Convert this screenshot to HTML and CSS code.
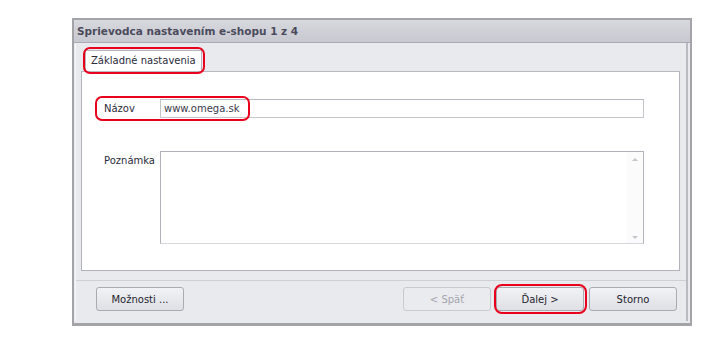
FILE: index.html
```html
<!DOCTYPE html>
<html lang="sk">
<head>
    <meta charset="UTF-8">
    <meta name="viewport" content="width=device-width, initial-scale=1.0">
    <title>Sprievodca nastavením e-shopu</title>
    <link rel="stylesheet" href="styles.css">
</head>
<body>
    <div class="window">
        <div class="titlebar">Sprievodca nastavením e-shopu 1 z 4</div>
        <div class="frame">
            <div class="tabs">
                <div class="tab active">Základné nastavenia<span class="mark mark-tab"></span></div>
            </div>
            <div class="tabpage">
                <div class="form">
                    <label class="label">Názov</label>
                    <div class="input">www.omega.sk</div>
                    <label class="label">Poznámka</label>
                    <div class="memo">
                        <div class="scroll">
                            <span class="arrow up"></span>
                            <span class="arrow down"></span>
                        </div>
                    </div>
                    <span class="mark mark-name"></span>
                </div>
            </div>
            <div class="footer">
                <button class="btn">Možnosti ...</button>
                <div class="spacer"></div>
                <button class="btn" disabled>&lt; Späť</button>
                <button class="btn next">Ďalej &gt;<span class="mark mark-next"></span></button>
                <button class="btn">Storno</button>
            </div>
        </div>
    </div>
</body>
</html>
```

FILE: styles.css
```css
body {
    margin: 0;
    background: #ffffff;
    font-family: "DejaVu Sans", Tahoma, sans-serif;
    font-size: 10px;
    color: #2b2b3a;
}
.window {
    margin: 18px 0 0 72px;
    width: 616px;
    height: 303px;
    border: 2px solid #a4a4a8;
    border-bottom-width: 3px;
    background: #e9eaee;
    display: flex;
    flex-direction: column;
}
.titlebar {
    height: 22px;
    line-height: 22px;
    padding-left: 3px;
    background: linear-gradient(to bottom, #d8d9de, #c7c8d0);
    border-bottom: 1px solid #a9aab4;
    font-weight: bold;
    font-size: 10.5px;
    color: #4b4b5c;
}
.frame {
    flex: 1;
    margin: 0 2px 2px 1px;
    border-left: 1px solid #f7f7f9;
    border-right: 2px solid #b9bac2;
    display: flex;
    flex-direction: column;
}
.tabs {
    height: 28px;
    display: flex;
    align-items: flex-end;
    padding-left: 9px;
}
.tab {
    position: relative;
    height: 20px;
    line-height: 20px;
    padding: 0 5px;
    background: #ffffff;
    border: 1px solid #b4b5bd;
    border-bottom: none;
    color: #2b2b3a;
}
.tabpage {
    height: 198px;
    margin: 0 6px 0 5px;
    background: #ffffff;
    border: 1px solid #b1b2ba;
    border-top-color: #b8b9c1;
}
.form {
    position: relative;
    display: grid;
    grid-template-columns: 56px 1fr;
    row-gap: 33px;
    padding: 27px 35px 0 22px;
}
.label {
    padding-top: 4px;
    color: #2b2b3a;
}
.input {
    height: 17px;
    line-height: 17px;
    padding-left: 3px;
    border: 1px solid #c5c6cc;
    border-top-color: #b7b8c0;
    color: #3a3a4a;
}
.memo {
    height: 91px;
    border: 1px solid #b0b1ba;
    border-bottom-color: #d6d7dc;
    display: flex;
    justify-content: flex-end;
}
.scroll {
    width: 16px;
    background: #fbfbfc;
    display: flex;
    flex-direction: column;
    justify-content: space-between;
    align-items: center;
    padding: 6px 0 4px;
}
.arrow {
    width: 0;
    height: 0;
    border-left: 3px solid transparent;
    border-right: 3px solid transparent;
}
.arrow.up {
    border-bottom: 3px solid #c5c6cc;
}
.arrow.down {
    border-top: 3px solid #c5c6cc;
}
.footer {
    flex: 1;
    margin-top: 9px;
    border-top: 1px solid #cfd0d6;
    display: flex;
    align-items: flex-start;
    gap: 5px;
    padding: 6px 9px 0 20px;
}
.spacer {
    flex: 1;
}
.btn {
    position: relative;
    width: 88px;
    height: 24px;
    font-family: "DejaVu Sans", Tahoma, sans-serif;
    font-size: 10px;
    color: #1f1f2e;
    background: linear-gradient(to bottom, #f1f2f5, #dfe0e5);
    border: 1px solid #a9aab2;
    border-radius: 3px;
    padding: 0;
}
.btn[disabled] {
    color: #a4a5ad;
    border-color: #c9cacf;
    background: #eaebee;
}
.mark {
    position: absolute;
    border: 2px solid #e8001c;
    border-radius: 7px;
    pointer-events: none;
}
.mark-tab {
    left: -3px;
    top: -4px;
    right: -4px;
    bottom: -3px;
}
.mark-name {
    left: 13px;
    top: 24px;
    width: 151px;
    height: 21px;
}
.mark-next {
    left: -3px;
    top: -4px;
    right: -4px;
    bottom: -4px;
    border-radius: 8px;
}
```
